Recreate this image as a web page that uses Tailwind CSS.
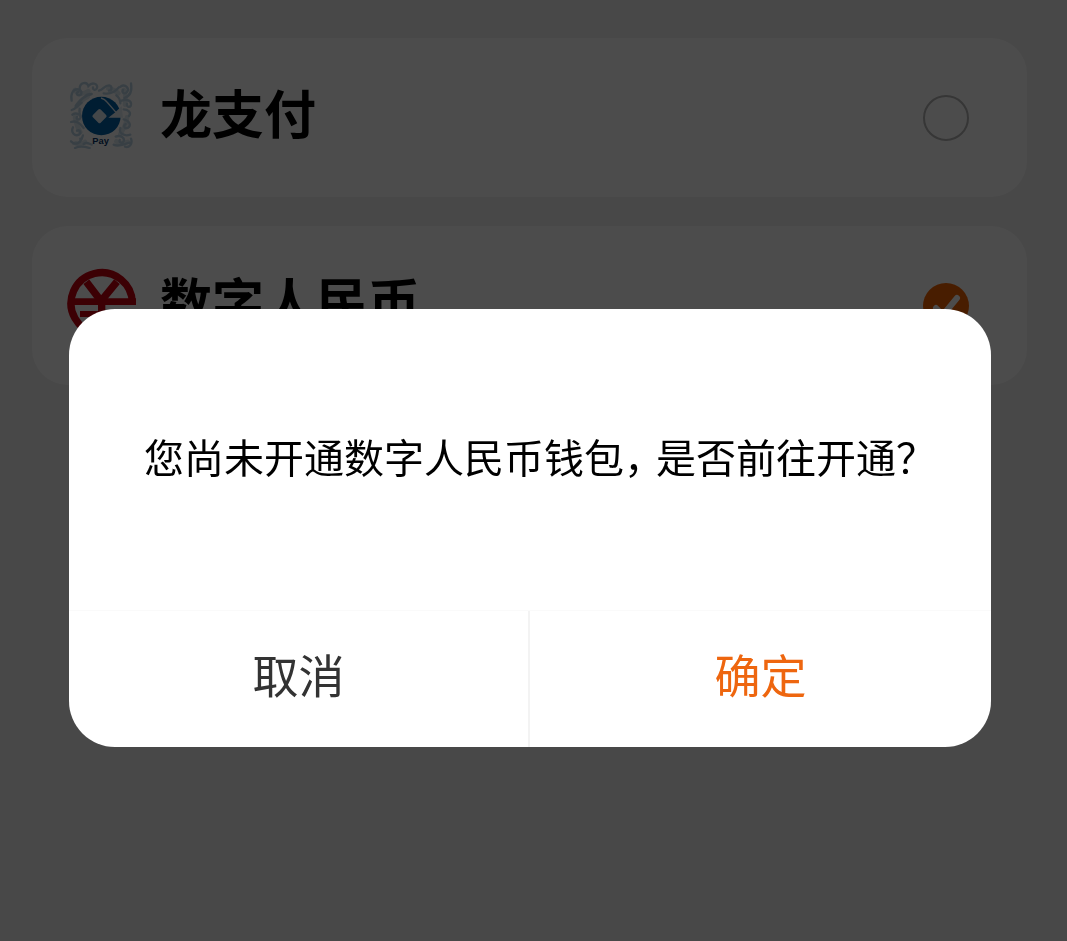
<!DOCTYPE html>
<html lang="zh-CN">
<head>
    <meta charset="UTF-8">
    <meta name="viewport" content="width=device-width, initial-scale=1.0">
    <title>选择支付方式</title>
    <script src="https://cdn.jsdelivr.net/npm/@tailwindcss/browser@4"></script>
</head>
<body class="min-h-screen bg-[#f2f2f2] font-['Noto_Sans_CJK_SC',sans-serif] text-black">

    <!-- Payment methods -->
    <main class="flex flex-col gap-[29px] pt-[38px] pr-10 pl-8">
        <label class="flex h-[159px] items-center justify-between rounded-[36px] bg-white pr-[58px] pl-[35px]">
            <span class="flex items-center gap-[23px] pb-2">
                <!-- CCB Pay -->
                <svg class="size-[70px] shrink-0" viewBox="36 27 210 210" fill="none" aria-hidden="true">
                    <g stroke="#dce9f2" stroke-width="14" stroke-linecap="round">
                        <path d="M60 60c8 14 24 14 40 4M206 60c6 12 8 24 4 44M60 142c4 16 6 30 16 44M216 142c0 20-10 34-20 50M90 216c-8 6-16 8-28 4M184 214c8 8 20 6 34 2M66 108c10-16 20-22 32-28M160 56c14 2 24 8 30 14"/>
                    </g>
                    <g stroke="#bbd4e4" stroke-width="7" stroke-linecap="round">
                        <path d="M50 92c-4-20 4-36 20-34 12 2 12 18 2 18-8 0-8-10-2-10"/>
                        <path d="M74 56c0-20 22-22 26-8 12-14 30-6 26 6-3 9-14 6-12-2"/>
                        <path d="M62 108c14-20 28-32 48-36M50 120c14-4 18-14 30-22"/>
                        <path d="M132 62c14-4 16-16 30-16 10 2 10 16 0 16M146 70c20 4 36-6 46-18"/>
                        <path d="M196 50c16-10 28 6 20 16-6 8-18 2-12-6M228 40c4 24-2 38-20 44"/>
                        <path d="M200 92c14-6 30 0 28 12-2 10-14 8-12-2M206 118c14 0 24 10 16 20"/>
                        <path d="M52 134c12-8 28 0 24 10-4 8-14 4-10-4M48 156c18-6 28 6 38 18"/>
                        <path d="M54 172c-8 16 6 28 18 22 8-6 2-16-6-12M48 214c14 14 32 4 28-8M84 196c-4 18-16 28-30 24"/>
                        <path d="M206 148c18 4 24 18 12 26-10 4-14-8-6-12M196 174c-6 16 12 26 30 20"/>
                        <path d="M182 200c16-6 28 4 24 14-4 8-14 4-12-4M176 224c16 8 30-2 48-6M228 206c6 16-6 28-18 24"/>
                        <path d="M86 222c10-8 16 0 24 2M60 234c16-8 30-4 44 0"/>
                        <path d="M90 80c6-8 12-8 18-8M184 76c8 6 12 14 12 24M74 116c-2 12 0 18 4 24"/>
                    </g>
                    <circle cx="139" cy="138" r="58" fill="#0061a8"/>
                    <g fill="#e4eff6">
                        <rect x="117" y="122" width="33" height="33" rx="5" transform="rotate(45 133.5 138.5)"/>
                        <path d="M160 143L181 127L200 108L204 143Z"/>
                    </g>
                    <path stroke="#e4eff6" stroke-width="4" d="M138 84Q150 88 156 96L183 127"/>
                    <text x="137" y="222" text-anchor="middle" fill="#083468" class="font-['Liberation_Sans',sans-serif] text-[28px] font-bold">Pay</text>
                </svg>
                <span class="pb-1 text-[52px] leading-[60px] font-bold">龙支付</span>
            </span>
            <input type="radio" name="pay" class="size-[46px] shrink-0 appearance-none rounded-full border-2 border-[#b4b4b4]">
        </label>

        <label class="flex h-[159px] items-center justify-between rounded-[36px] bg-white pr-[58px] pl-[35px]">
            <span class="flex items-center gap-[23px] pb-2">
                <!-- e-CNY -->
                <svg class="size-[70px] shrink-0" viewBox="36 36 210 210" fill="none" stroke="#c8000f" aria-hidden="true">
                    <path stroke-width="22" d="M232 148A92 92 0 1 0 205 210"/>
                    <path stroke-width="20" d="M42 140H243"/>
                    <path stroke-width="22" d="M94 80L138 138L186 80M140 130V186"/>
                    <path stroke-width="18" d="M75 177H205"/>
                </svg>
                <span class="pb-1 text-[52px] leading-[60px] font-bold">数字人民币</span>
            </span>
            <span class="grid size-[46px] shrink-0">
                <input type="radio" name="pay" checked class="col-start-1 row-start-1 size-[46px] appearance-none rounded-full checked:bg-[#f26200]">
                <svg class="pointer-events-none col-start-1 row-start-1 size-[46px]" viewBox="0 0 46 46" fill="none" stroke="#fff" stroke-width="6" stroke-linecap="round" stroke-linejoin="round" aria-hidden="true">
                    <path d="M13 25L20 32L34 15"/>
                </svg>
            </span>
        </label>
    </main>

    <!-- Confirm dialog -->
    <div class="fixed inset-0 bg-black/70 pt-[309px] pr-[76px] pl-[69px]">
        <div role="dialog" aria-modal="true" aria-labelledby="dialog-text" class="overflow-hidden rounded-[46px] bg-white">
            <p id="dialog-text" class="flex h-[301px] items-center justify-center pb-2 text-[40px] leading-[60px] whitespace-nowrap"><span>您尚未开通数字人民币钱包<span class="mr-3 [font-feature-settings:'halt']">，</span>是否前往开通<span class="[font-feature-settings:'halt']">？</span></span></p>
            <div class="grid grid-cols-2 border-t border-[#fafafa] text-[46px] leading-[60px]">
                <button type="button" class="h-34 border-r-2 border-[#f3f3f3] pb-3 text-[#333]">取消</button>
                <button type="button" class="h-34 pb-3 text-[#ee660f]">确定</button>
            </div>
        </div>
    </div>

</body>
</html>
